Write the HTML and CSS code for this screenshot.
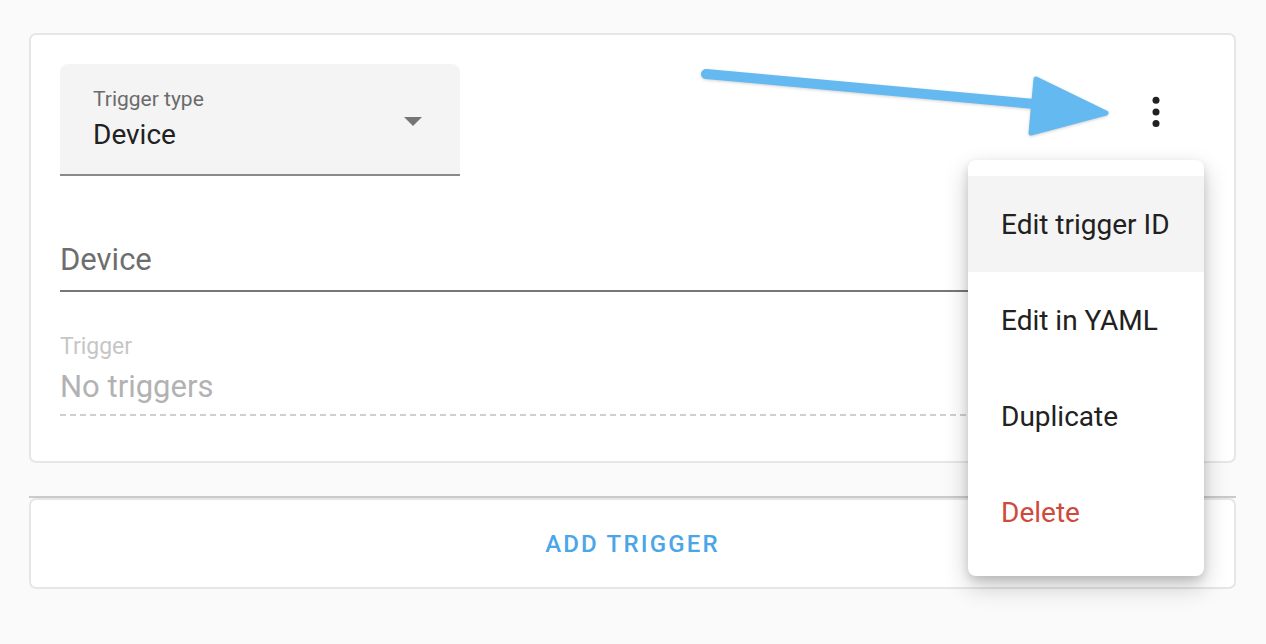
FILE: index.html
```html
<!DOCTYPE html>
<html lang="en">
<head>
<meta charset="utf-8">
<title>Trigger editor</title>
<link rel="stylesheet" href="styles.css">
</head>
<body>
<div class="page">
  <div class="card trigger-card">
    <div class="header">
      <div class="select">
        <div class="select-text">
          <div class="select-label">Trigger type</div>
          <div class="select-value">Device</div>
        </div>
        <span class="select-arrow"></span>
      </div>
      <div class="kebab">
        <svg width="14" height="36" viewBox="0 0 14 36">
          <circle cx="7" cy="6.3" r="3.5"/>
          <circle cx="7" cy="18" r="3.5"/>
          <circle cx="7" cy="29.6" r="3.5"/>
        </svg>
      </div>
    </div>
    <div class="field device-field">
      <div class="field-input">Device</div>
    </div>
    <div class="field trigger-field">
      <div class="field-label">Trigger</div>
      <div class="field-value">No triggers</div>
      <div class="dashed"></div>
    </div>
  </div>
  <div class="add-wrap">
    <div class="card add-card">
      <span class="add-btn">ADD TRIGGER</span>
    </div>
  </div>
</div>

<div class="menu">
  <div class="menu-item active">Edit trigger ID</div>
  <div class="menu-item">Edit in YAML</div>
  <div class="menu-item">Duplicate</div>
  <div class="menu-item danger">Delete</div>
</div>

<svg class="arrow" width="1266" height="644" viewBox="0 0 1266 644">
  <g class="arrow-shape">
    <line x1="706" y1="74" x2="1040" y2="104.5" stroke="#63b9f0" stroke-width="10" stroke-linecap="round"/>
    <polygon points="1036,79 1106,113 1031,133" fill="#63b9f0" stroke="#63b9f0" stroke-width="5" stroke-linejoin="round"/>
  </g>
</svg>
</body>
</html>
```

FILE: styles.css
```css
* {
  box-sizing: border-box;
}

html, body {
  margin: 0;
  padding: 0;
  background: #fafafa;
  font-family: Roboto, "Noto Sans", "Liberation Sans", sans-serif;
  color: #212121;
  width: 1266px;
  height: 644px;
  overflow: hidden;
}

body {
  position: relative;
}

.page {
  padding: 33px 30px 0 29px;
}

.card {
  background: #ffffff;
  border: 2px solid #e6e6e6;
  border-radius: 7px;
}

.trigger-card {
  padding: 29px 31px 45px 29px;
}

.header {
  display: flex;
  justify-content: space-between;
  align-items: flex-start;
}

.select {
  width: 400px;
  height: 112px;
  background: #f4f4f4;
  border-radius: 8px 8px 0 0;
  border-bottom: 2px solid #8a8a8a;
  padding: 20px 38px 0 33px;
  display: flex;
  align-items: flex-start;
}

.select-text {
  flex: 1;
}

.select-label {
  font-size: 21px;
  line-height: 30px;
  color: #6b6b6b;
}

.select-value {
  margin-top: 4px;
  font-size: 28px;
  line-height: 34px;
  color: #212121;
}

.select-arrow {
  width: 0;
  height: 0;
  margin-top: 33px;
  border-left: 9.5px solid transparent;
  border-right: 9.5px solid transparent;
  border-top: 9px solid #757575;
}

.kebab {
  margin-top: 30px;
  margin-right: 40px;
  width: 14px;
  height: 36px;
  display: flex;
}

.kebab svg {
  fill: #212121;
}

.field {
  display: flex;
  flex-direction: column;
}

.device-field {
  margin-top: 64px;
  padding-bottom: 10px;
  border-bottom: 2px solid #777777;
}

.field-input {
  font-size: 31px;
  line-height: 40px;
  color: #6e6e6e;
}

.trigger-field {
  margin-top: 41px;
}

.field-label {
  font-size: 23px;
  line-height: 28px;
  color: #c6c6c6;
}

.field-value {
  margin-top: 6px;
  font-size: 31px;
  line-height: 40px;
  color: #b2b2b2;
}

.dashed {
  margin-top: 7px;
  height: 2px;
  background-image: repeating-linear-gradient(to right, #cfcfcf 0, #cfcfcf 6px, transparent 6px, transparent 10px);
}

.add-wrap {
  margin-top: 33px;
  border-top: 2px solid #cacaca;
}

.add-card {
  height: 91px;
  display: flex;
  align-items: center;
  justify-content: center;
}

.add-btn {
  font-size: 24px;
  font-weight: 500;
  letter-spacing: 2.2px;
  color: #4aa6e8;
  line-height: 30px;
  margin-top: 0;
}

.menu {
  position: absolute;
  left: 968px;
  top: 160px;
  width: 236px;
  padding: 16px 0;
  background: #ffffff;
  border-radius: 8px;
  box-shadow: 0 10px 24px rgba(0, 0, 0, 0.22), 0 4px 8px rgba(0, 0, 0, 0.12);
}

.menu-item {
  height: 96px;
  line-height: 98px;
  padding-left: 33px;
  font-size: 28px;
  color: #212121;
  white-space: nowrap;
}

.menu-item.active {
  background: #f4f4f4;
}

.menu-item.danger {
  color: #d04a3b;
}

.arrow {
  position: absolute;
  left: 0;
  top: 0;
  pointer-events: none;
}

.arrow-shape {
  filter: drop-shadow(0 1px 1.5px rgba(0, 0, 0, 0.18));
}
```
